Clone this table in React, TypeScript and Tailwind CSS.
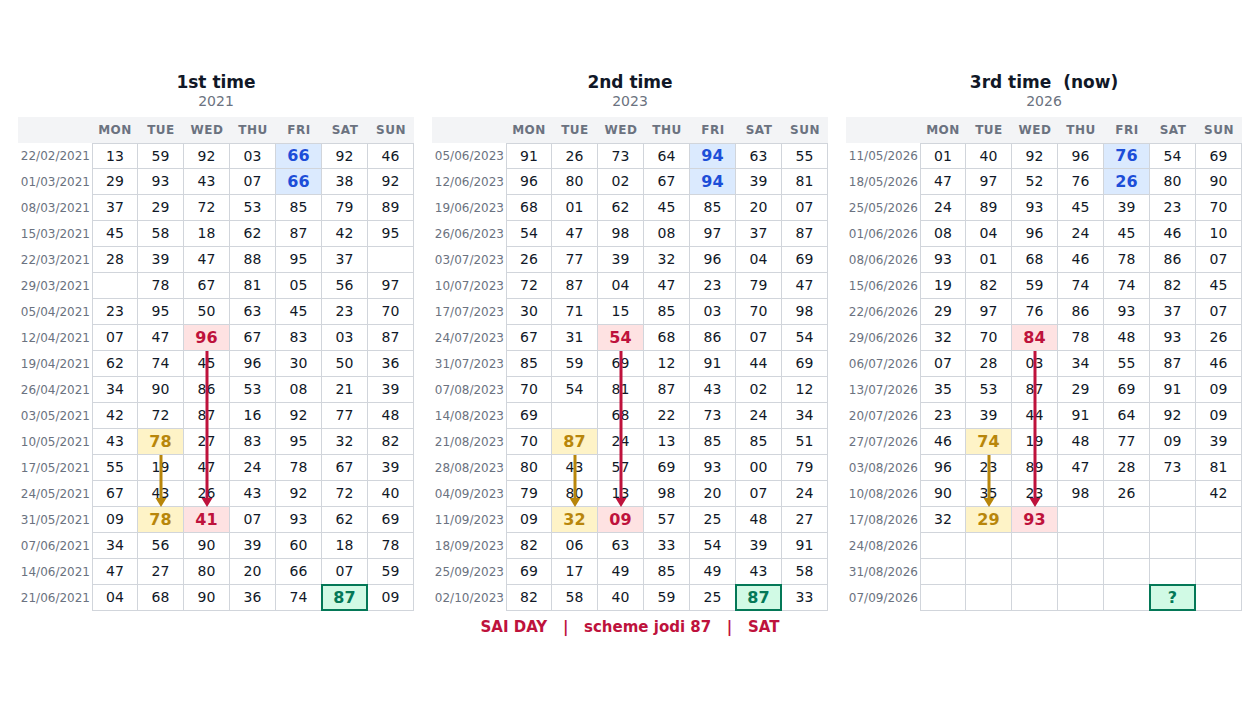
import React from "react";

type TableData = { title: string; year: string; rows: [string, string][] };

const DAYS = ["MON", "TUE", "WED", "THU", "FRI", "SAT", "SUN"];

const t1: TableData = {
  title: "1st time",
  year: "2021",
  rows: [
    ["22/02/2021", "13 59 92 03 66b 92 46"],
    ["01/03/2021", "29 93 43 07 66b 38 92"],
    ["08/03/2021", "37 29 72 53 85 79 89"],
    ["15/03/2021", "45 58 18 62 87 42 95"],
    ["22/03/2021", "28 39 47 88 95 37 -"],
    ["29/03/2021", "- 78 67 81 05 56 97"],
    ["05/04/2021", "23 95 50 63 45 23 70"],
    ["12/04/2021", "07 47 96r 67 83 03 87"],
    ["19/04/2021", "62 74 45 96 30 50 36"],
    ["26/04/2021", "34 90 86 53 08 21 39"],
    ["03/05/2021", "42 72 87 16 92 77 48"],
    ["10/05/2021", "43 78y 27 83 95 32 82"],
    ["17/05/2021", "55 19 47 24 78 67 39"],
    ["24/05/2021", "67 43 26 43 92 72 40"],
    ["31/05/2021", "09 78y 41r 07 93 62 69"],
    ["07/06/2021", "34 56 90 39 60 18 78"],
    ["14/06/2021", "47 27 80 20 66 07 59"],
    ["21/06/2021", "04 68 90 36 74 87g 09"],
  ],
};

const t2: TableData = {
  title: "2nd time",
  year: "2023",
  rows: [
    ["05/06/2023", "91 26 73 64 94b 63 55"],
    ["12/06/2023", "96 80 02 67 94b 39 81"],
    ["19/06/2023", "68 01 62 45 85 20 07"],
    ["26/06/2023", "54 47 98 08 97 37 87"],
    ["03/07/2023", "26 77 39 32 96 04 69"],
    ["10/07/2023", "72 87 04 47 23 79 47"],
    ["17/07/2023", "30 71 15 85 03 70 98"],
    ["24/07/2023", "67 31 54r 68 86 07 54"],
    ["31/07/2023", "85 59 69 12 91 44 69"],
    ["07/08/2023", "70 54 81 87 43 02 12"],
    ["14/08/2023", "69 - 68 22 73 24 34"],
    ["21/08/2023", "70 87y 24 13 85 85 51"],
    ["28/08/2023", "80 43 57 69 93 00 79"],
    ["04/09/2023", "79 80 13 98 20 07 24"],
    ["11/09/2023", "09 32y 09r 57 25 48 27"],
    ["18/09/2023", "82 06 63 33 54 39 91"],
    ["25/09/2023", "69 17 49 85 49 43 58"],
    ["02/10/2023", "82 58 40 59 25 87g 33"],
  ],
};

const t3: TableData = {
  title: "3rd time  (now)",
  year: "2026",
  rows: [
    ["11/05/2026", "01 40 92 96 76b 54 69"],
    ["18/05/2026", "47 97 52 76 26b 80 90"],
    ["25/05/2026", "24 89 93 45 39 23 70"],
    ["01/06/2026", "08 04 96 24 45 46 10"],
    ["08/06/2026", "93 01 68 46 78 86 07"],
    ["15/06/2026", "19 82 59 74 74 82 45"],
    ["22/06/2026", "29 97 76 86 93 37 07"],
    ["29/06/2026", "32 70 84r 78 48 93 26"],
    ["06/07/2026", "07 28 03 34 55 87 46"],
    ["13/07/2026", "35 53 87 29 69 91 09"],
    ["20/07/2026", "23 39 44 91 64 92 09"],
    ["27/07/2026", "46 74y 19 48 77 09 39"],
    ["03/08/2026", "96 23 89 47 28 73 81"],
    ["10/08/2026", "90 35 23 98 26 - 42"],
    ["17/08/2026", "32 29y 93r - - - -"],
    ["24/08/2026", "- - - - - - -"],
    ["31/08/2026", "- - - - - - -"],
    ["07/09/2026", "- - - - - ?g -"],
  ],
};

function Cell({ raw, first, top }: { raw: string; first: boolean; top: boolean }) {
  const mark = /[bryg]$/.test(raw) ? raw.slice(-1) : "";
  const val = raw === "-" ? "" : mark ? raw.slice(0, -1) : raw;
  let cls =
    "relative w-[46px] h-[26px] flex items-center justify-center border-r border-b border-[#d1d5db]";
  if (first) cls += " border-l";
  if (top) cls += " border-t";
  if (mark === "b") cls += " bg-[#dbeafe] text-[#1d4ed8] font-bold text-[16px]";
  else if (mark === "r") cls += " bg-[#fee2e2] text-[#be123c] font-bold text-[16px]";
  else if (mark === "y") cls += " bg-[#fef3c7] text-[#b8860b] font-bold text-[16px]";
  else cls += " text-[14px] text-[#111827]";
  if (mark === "g") {
    return (
      <div className={cls}>
        <div className="absolute top-[-1px] left-[-1px] right-[-1px] bottom-[-1px] border-2 border-[#047857] bg-[#d1fae5] flex items-center justify-center text-[16px] font-bold text-[#047857]">
          {val}
        </div>
      </div>
    );
  }
  return <div className={cls}>{val}</div>;
}

function Table({ data }: { data: TableData }) {
  return (
    <div className="flex flex-col items-center w-[396px]">
      <div className="text-[17px] leading-5 font-bold text-[#111827] whitespace-pre">{data.title}</div>
      <div className="text-[14px] leading-[18px] text-[#6b7280]">{data.year}</div>
      <div className="relative mt-[7px] w-[396px]">
        <div className="flex h-[26px] bg-[#f3f4f6] items-center">
          <div className="w-[74px]" />
          {DAYS.map((d) => (
            <div
              key={d}
              className="w-[46px] text-center text-[12px] font-bold tracking-[0.04em] text-[#6b7280]"
            >
              {d}
            </div>
          ))}
        </div>
        {data.rows.map(([date, cells], ri) => (
          <div key={date} className="flex">
            <div className="w-[74px] h-[26px] flex items-center justify-end pr-[2px] text-[12px] text-[#6b7280]">
              {date}
            </div>
            {cells.split(" ").map((c, ci) => (
              <Cell key={ci} raw={c} first={ci === 0} top={ri === 0} />
            ))}
          </div>
        ))}
        <svg
          className="absolute left-0 top-0 pointer-events-none"
          width={396}
          height={494}
          viewBox="0 0 396 494"
        >
          <line x1={189} y1={234} x2={189} y2={383} stroke="#be123c" strokeWidth={3} />
          <polygon points="183.5,381 194.5,381 189,390" fill="#be123c" />
          <line x1={143} y1={338} x2={143} y2={383} stroke="#b8860b" strokeWidth={3} />
          <polygon points="137.5,381 148.5,381 143,390" fill="#b8860b" />
        </svg>
      </div>
    </div>
  );
}

export default function App() {
  return (
    <div className="w-[1260px] h-[709px] bg-white font-['DejaVu_Sans',sans-serif]">
      <div className="flex justify-center gap-[18px] pt-[72px]">
        <Table data={t1} />
        <Table data={t2} />
        <Table data={t3} />
      </div>
      <div className="mt-[6px] text-center text-[15px] leading-5 font-bold text-[#be123c] whitespace-pre">
        {"SAI DAY   |   scheme jodi 87   |   SAT"}
      </div>
    </div>
  );
}
